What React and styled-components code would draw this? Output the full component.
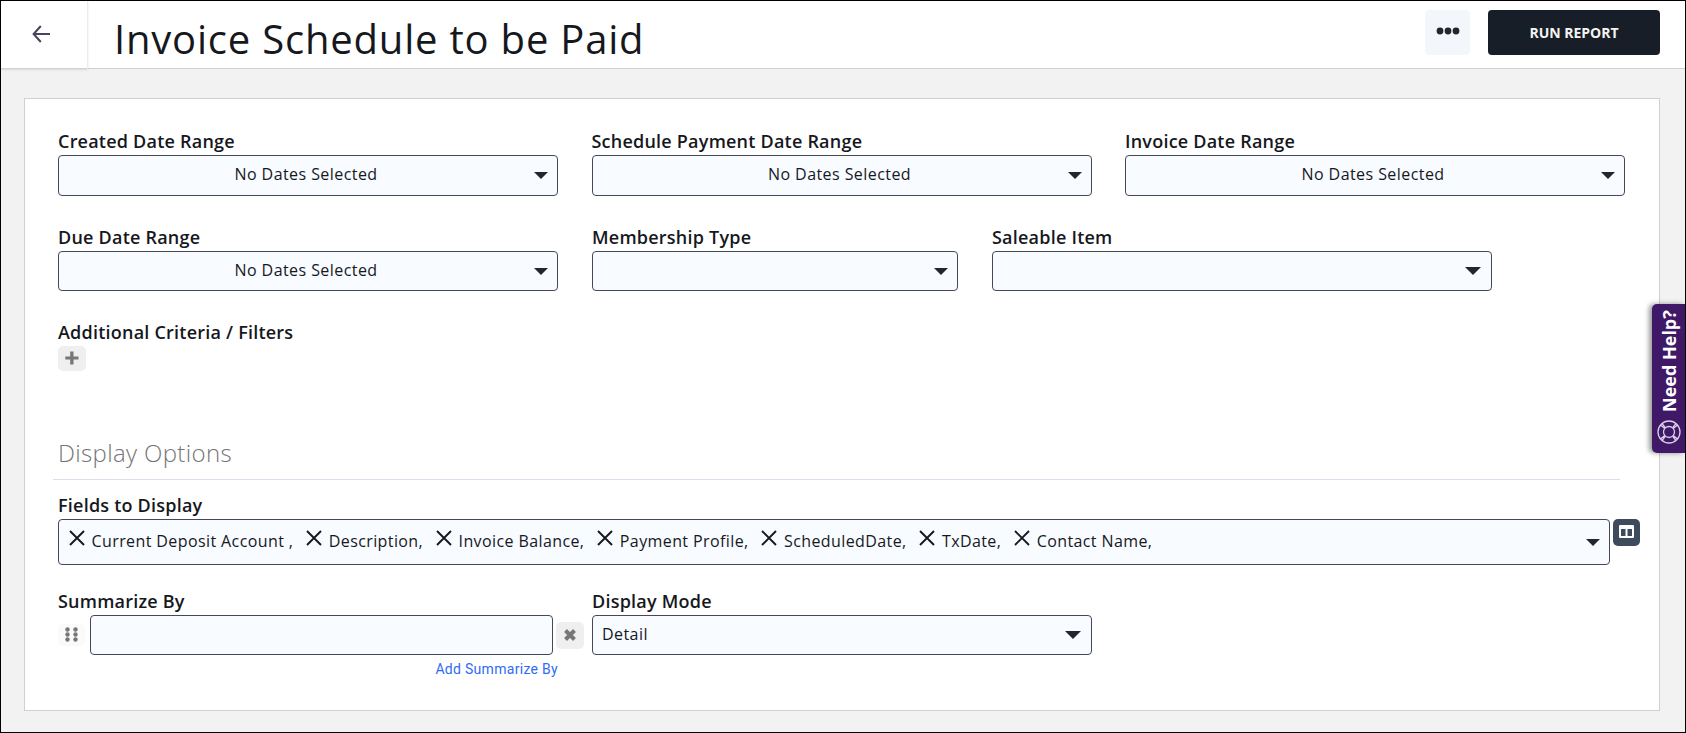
import React from "react";
import styled, { createGlobalStyle } from "styled-components";

const dateRanges = ["Created Date Range", "Schedule Payment Date Range", "Invoice Date Range"];

const fields = [
  "Current Deposit Account ,",
  "Description,",
  "Invoice Balance,",
  "Payment Profile,",
  "ScheduledDate,",
  "TxDate,",
  "Contact Name,",
];

const Caret = ({ big }) => (
  <CaretIcon $big={big} viewBox="0 0 14 7" preserveAspectRatio="none">
    <path d="M0 0h14L7 7z" fill="#23262d" />
  </CaretIcon>
);

const DateField = ({ label, height }) => (
  <Field $width={500}>
    <Label>{label}</Label>
    <Select $height={height}>
      <Value $center>No Dates Selected</Value>
      <Caret />
    </Select>
  </Field>
);

const App = () => {
  return (
    <Page>
      <GlobalStyle />
      <Header>
        <Back>
          <svg width="18" height="18" viewBox="0 0 18 18" fill="none" stroke="#45455e" strokeWidth="2">
            <path d="M18 9H1.500M8.800 1L1.600 9l7.200 8" />
          </svg>
        </Back>
        <Title>Invoice Schedule to be Paid</Title>
        <More>
          <svg width="24" height="8" viewBox="0 0 24 8" fill="#23262d">
            <circle cx="4" cy="4" r="3.4" />
            <circle cx="12" cy="4" r="3.4" />
            <circle cx="20" cy="4" r="3.4" />
          </svg>
        </More>
        <RunButton>RUN REPORT</RunButton>
      </Header>
      <Card>
        <Row $gap={33.5}>
          {dateRanges.map((label) => (
            <DateField key={label} label={label} height={41} />
          ))}
        </Row>
        <Row $gap={34} $top={27}>
          <DateField label="Due Date Range" height={40} />
          <Field $width={366}>
            <Label>Membership Type</Label>
            <Select $height={40}>
              <Value />
              <Caret />
            </Select>
          </Field>
          <Field $width={500}>
            <Label>Saleable Item</Label>
            <Select $height={40}>
              <Value />
              <Caret big />
            </Select>
          </Field>
        </Row>
        <Criteria>
          <Label>Additional Criteria / Filters</Label>
          <SmallButton $width={28} $height={25}>
            <svg width="14" height="14" viewBox="0 0 14 14" fill="#777">
              <path d="M5.200 .5h3.300v4.900h5v3.200h-5v4.900H5.200V8.600H.3V5.400h4.900z" />
            </svg>
          </SmallButton>
        </Criteria>
        <SectionTitle>Display Options</SectionTitle>
        <FieldsRow>
          <Field $width={1552}>
            <Label>Fields to Display</Label>
            <Select $height={46}>
              <Chips>
                {fields.map((name) => (
                  <Chip key={name}>
                    <svg width="16" height="16" viewBox="0 0 16 16" stroke="#16181d" strokeWidth="1.9">
                      <path d="M1 1l14 14M15 1L1 15" />
                    </svg>
                    <span>{name}</span>
                  </Chip>
                ))}
              </Chips>
              <Caret />
            </Select>
          </Field>
          <ColumnsButton>
            <svg width="15" height="13" viewBox="0 0 15 13">
              <rect width="15" height="13" rx="1" fill="#fff" />
              <path d="M2 4h4.500v7H2zM8.500 4H13v7H8.500z" fill="#3d4b5c" />
            </svg>
          </ColumnsButton>
        </FieldsRow>
        <Row $gap={8} $top={22}>
          <Summarize>
            <Label>Summarize By</Label>
            <SummarizeLine>
              <SmallButton $width={27} $height={22} $light>
                <svg width="13" height="15" viewBox="0 0 13 15" fill="#777">
                  <circle cx="2.500" cy="2.500" r="2.200" />
                  <circle cx="10.500" cy="2.500" r="2.200" />
                  <circle cx="2.500" cy="7.500" r="2.200" />
                  <circle cx="10.500" cy="7.500" r="2.200" />
                  <circle cx="2.500" cy="12.500" r="2.200" />
                  <circle cx="10.500" cy="12.500" r="2.200" />
                </svg>
              </SmallButton>
              <Input />
              <SmallButton $width={28} $height={27}>
                <svg width="12" height="12" viewBox="0 0 12 12" stroke="#777" strokeWidth="4">
                  <path d="M1.500 1.500l9 9M10.500 1.500l-9 9" />
                </svg>
              </SmallButton>
            </SummarizeLine>
            <AddLink>Add Summarize By</AddLink>
          </Summarize>
          <Field $width={500}>
            <Label>Display Mode</Label>
            <Select $height={40}>
              <Value>Detail</Value>
              <Caret big />
            </Select>
          </Field>
        </Row>
      </Card>
      <Help>
        <HelpText>Need Help?</HelpText>
        <svg width="24" height="24" viewBox="0 0 24 24" fill="none" stroke="#d9cfe6" strokeWidth="1.300">
          <circle cx="12" cy="12" r="11" />
          <circle cx="12" cy="12" r="5.500" />
          <path d="M3.500 5l4.300 3.500M5 3.500l3.500 4.300M20.500 5l-4.300 3.500M19 3.500l-3.500 4.300M3.500 19l4.300-3.500M5 20.500l3.500-4.300M20.500 19l-4.300-3.500M19 20.500l-3.500-4.300" />
        </svg>
      </Help>
    </Page>
  );
};

const GlobalStyle = createGlobalStyle`
  * {
    box-sizing: border-box;
  }
  body {
    margin: 0;
    font-family: "Open Sans", sans-serif;
    color: #16181d;
  }
  svg {
    display: block;
    flex: none;
  }
`;
const Page = styled.div`
  position: relative;
  width: 1686px;
  height: 733px;
  overflow: hidden;
  border: 1px solid #000;
  background: #f2f2f2;
`;
const Header = styled.header`
  display: flex;
  height: 68px;
  padding-right: 25px;
  border-bottom: 1px solid #d0d0d0;
  background: #fff;
`;
const Back = styled.div`
  width: 87px;
  height: 68px;
  padding: 24px 0 0 31px;
  border-right: 1px solid #ececec;
  box-shadow: 0 1px 2px rgba(0, 0, 0, 0.1);
`;
const Title = styled.h1`
  flex: 1;
  margin: 0;
  padding: 9px 0 0 26px;
  font-size: 40px;
  font-weight: 400;
  line-height: 57px;
  letter-spacing: 0.8px;
  white-space: nowrap;
`;
const More = styled.div`
  display: flex;
  align-items: center;
  justify-content: center;
  width: 45px;
  height: 45px;
  margin-top: 9px;
  padding-bottom: 3px;
  border-radius: 4px;
  background: #f3f7fb;
`;
const RunButton = styled.button`
  width: 172px;
  height: 45px;
  margin: 9px 0 0 18px;
  padding: 0 0 1px;
  border: 0;
  border-radius: 4px;
  background: #171e28;
  color: #f4f4f4;
  font: 700 14px "Open Sans", sans-serif;
`;
const Card = styled.main`
  width: 1636px;
  height: 613px;
  margin: 29px 0 0 23px;
  padding: 28px 0 0 33px;
  border: 1px solid #d0d0d0;
  background: #fff;
`;
const Row = styled.div`
  display: flex;
  gap: ${(props) => props.$gap}px;
  margin-top: ${(props) => props.$top || 0}px;
`;
const Field = styled.div`
  width: ${(props) => props.$width}px;
`;
const Label = styled.div`
  font-size: 18px;
  font-weight: 600;
  line-height: 28px;
  letter-spacing: 0.22px;
  white-space: nowrap;
`;
const Select = styled.div`
  display: flex;
  align-items: center;
  height: ${(props) => props.$height}px;
  padding: 0 9px;
  border: 1px solid #454859;
  border-radius: 4px;
  background: #f8fbff;
`;
const Value = styled.div`
  flex: 1;
  padding: 0 0 3px ${(props) => (props.$center ? 10 : 0)}px;
  font-size: 16px;
  line-height: 22px;
  letter-spacing: 0.43px;
  text-align: ${(props) => (props.$center ? "center" : "left")};
`;
const CaretIcon = styled.svg`
  width: ${(props) => (props.$big ? 16 : 14)}px;
  height: ${(props) => (props.$big ? 8 : 7)}px;
  margin-right: ${(props) => (props.$big ? 1 : 0)}px;
`;
const Criteria = styled.div`
  margin-top: 27px;
`;
const SmallButton = styled.div`
  display: flex;
  flex: none;
  align-items: center;
  justify-content: center;
  width: ${(props) => props.$width}px;
  height: ${(props) => props.$height}px;
  padding-bottom: 1px;
  border-radius: 5px;
  background: ${(props) => (props.$light ? "#fafafa" : "#efefef")};
`;
const SectionTitle = styled.h2`
  width: 1567px;
  height: 43px;
  margin: 66px 0 0 -5px;
  padding-left: 5px;
  border-bottom: 1px solid #dcdcee;
  color: #757575;
  font-size: 24px;
  font-weight: 300;
  line-height: 31px;
  letter-spacing: 0.35px;
`;
const FieldsRow = styled.div`
  display: flex;
  gap: 3px;
  margin-top: 11px;
`;
const Chips = styled.div`
  display: flex;
  flex: 1;
  gap: 12.9px;
  padding-left: 1px;
`;
const Chip = styled.div`
  display: flex;
  gap: 6.5px;
  padding-bottom: 2px;
  font-size: 16px;
  line-height: 22px;
  letter-spacing: 0.4px;
  white-space: nowrap;
`;
const ColumnsButton = styled.div`
  display: flex;
  align-items: center;
  justify-content: center;
  width: 27px;
  height: 27px;
  margin-top: 28px;
  padding-bottom: 2px;
  border-radius: 5px;
  background: #3d4b5c;
`;
const Summarize = styled.div`
  width: 526px;
`;
const SummarizeLine = styled.div`
  display: flex;
  align-items: center;
  height: 40px;
`;
const Input = styled.input`
  width: 463px;
  height: 40px;
  margin: 0 3px 0 5px;
  border: 1px solid #454859;
  border-radius: 4px;
  background: #f8fbff;
`;
const AddLink = styled.div`
  width: 500px;
  padding-top: 5px;
  color: #2f6bf5;
  font: 400 14px/18px Roboto, sans-serif;
  letter-spacing: 0.3px;
  text-align: right;
`;
const Help = styled.div`
  position: absolute;
  top: 303px;
  right: 0;
  display: flex;
  flex-direction: column;
  align-items: center;
  width: 33px;
  height: 149px;
  padding-top: 6px;
  border-radius: 5px 0 0 5px;
  background: #3f1868;
  box-shadow: -3px 0 5px rgba(0, 0, 0, 0.4);
`;
const HelpText = styled.div`
  height: 110px;
  color: #fff;
  font-size: 18px;
  font-weight: 700;
  line-height: 32px;
  white-space: nowrap;
  writing-mode: vertical-rl;
  transform: rotate(180deg);
  text-align: right;
`;

export default App;
